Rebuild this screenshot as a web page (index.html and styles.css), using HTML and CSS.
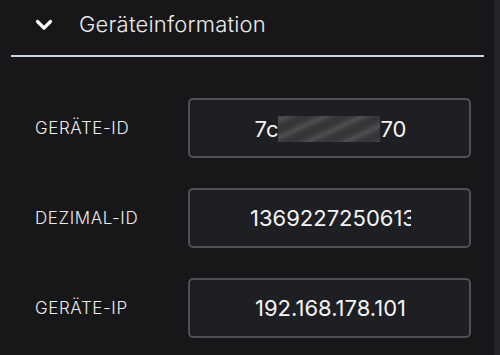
FILE: index.html
```html
<!DOCTYPE html>
<html lang="de">
<head>
<meta charset="utf-8">
<link rel="stylesheet" href="styles.css">
</head>
<body>
<div class="page">
  <div class="panel">
    <div class="header">
      <svg class="chev" width="18" height="12" viewBox="0 0 18 12"><path d="M2.5 2.5 L9 9 L15.5 2.5" fill="none" stroke="#ffffff" stroke-width="3.2" stroke-linecap="round" stroke-linejoin="round"/></svg>
      <span class="title">Geräteinformation</span>
    </div>
    <div class="rule"></div>
    <div class="rows">
      <div class="row">
        <div class="label">GERÄTE-ID</div>
        <div class="field"><div class="value"><span>7c</span><span class="blur"></span><span>70</span></div></div>
      </div>
      <div class="row">
        <div class="label">DEZIMAL-ID</div>
        <div class="field"><div class="value">13692272506131</div></div>
      </div>
      <div class="row">
        <div class="label">GERÄTE-IP</div>
        <div class="field"><div class="value">192.168.178.101</div></div>
      </div>
    </div>
  </div>
  <div class="track"></div>
</div>
</body>
</html>
```
FILE: styles.css
```css
html, body {
  margin: 0;
  padding: 0;
  background: #17171a;
}
body {
  font-family: Inter, "Noto Sans", sans-serif;
  color: #f2f2f2;
  width: 500px;
  height: 355px;
  overflow: hidden;
}
.page {
  display: flex;
  height: 355px;
}
.panel {
  flex: 1;
  padding: 0 10px 0 11px;
}
.track {
  width: 6px;
  background: #232428;
}
.header {
  display: flex;
  align-items: center;
  height: 48px;
  padding-left: 24px;
  gap: 26px;
}
.chev {
  display: block;
  margin-top: 2px;
}
.title {
  font-size: 22px;
  font-weight: 300;
  color: #ececec;
  letter-spacing: 0.2px;
}
.rule {
  height: 2px;
  margin-top: 7px;
  background: #c9d7e2;
}
.rows {
  display: flex;
  flex-direction: column;
  gap: 30px;
  padding-top: 41px;
}
.row {
  display: flex;
  align-items: center;
}
.label {
  width: 177px;
  padding-left: 24px;
  box-sizing: border-box;
  font-size: 17px;
  font-weight: 300;
  color: #ececec;
  letter-spacing: 0.6px;
}
.field {
  width: 283px;
  height: 60px;
  box-sizing: border-box;
  border: 2px solid #505154;
  border-radius: 5px;
  background: #1e1f23;
  padding: 0 58px 0 60px;
  display: flex;
  align-items: center;
}
.value {
  flex: 1;
  overflow: hidden;
  white-space: nowrap;
  text-align: center;
  font-size: 22px;
  color: #f4f4f4;
  line-height: 28px;
}
.value span {
  vertical-align: middle;
}
.blur {
  display: inline-block;
  width: 102px;
  height: 26px;
  background:
    repeating-linear-gradient(155deg, rgba(255,255,255,0.0) 0px, rgba(255,255,255,0.10) 4px, rgba(255,255,255,0.0) 8px, rgba(0,0,0,0.12) 12px, rgba(255,255,255,0) 16px),
    #3b3b3e;
}
```
